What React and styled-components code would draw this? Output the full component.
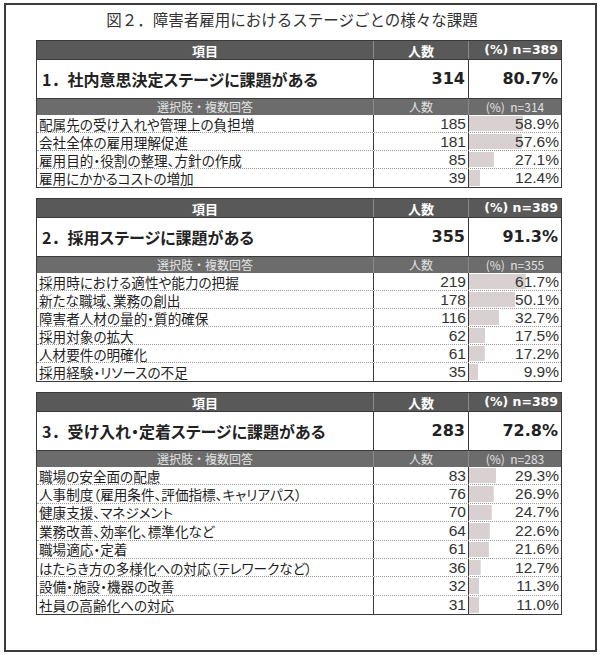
import React from 'react';
import styled, { createGlobalStyle } from 'styled-components';

const GlobalStyle = createGlobalStyle`
  html, body {
    margin: 0;
    padding: 0;
    background: #ffffff;
  }
  body {
    font-family: 'Noto Sans CJK JP', 'Noto Sans', sans-serif;
    color: #222;
  }
`;

const Frame = styled.div`
  box-sizing: border-box;
  margin: 3px 5px 0 4px;
  width: 593px;
  height: 649px;
  border: 2px solid #3c3c3c;
  padding: 0 33px 0 30px;
  display: flex;
  flex-direction: column;
`;

const Title = styled.h1`
  margin: 0;
  height: 35px;
  padding-right: 14px;
  font-size: 15.5px;
  font-weight: 400;
  line-height: 28px;
  text-align: center;
  color: #333;
`;

const Table = styled.div`
  border: 1px solid #3a3a3a;
  margin-bottom: 10px;
`;

const Row = styled.div`
  display: grid;
  grid-template-columns: 337px 95px 1fr;
  height: ${(p) => p.h}px;
  background: ${(p) => p.bg || '#fff'};
  color: ${(p) => p.fg || '#222'};
  border-bottom: ${(p) => p.line || 'none'};
  box-sizing: border-box;
  &:last-child {
    border-bottom: none;
  }
`;

const Cell = styled.div`
  display: flex;
  align-items: center;
  justify-content: ${(p) => p.align || 'flex-start'};
  padding: 0 ${(p) => p.pad ?? 3}px;
  border-right: ${(p) => (p.last ? 'none' : `1px solid ${p.sep || '#3a3a3a'}`)};
  font-size: ${(p) => p.size || 13}px;
  font-weight: ${(p) => (p.bold ? 700 : 400)};
  font-family: ${(p) => (p.num ? "'DejaVu Sans', 'Noto Sans', sans-serif" : 'inherit')};
  line-height: 1;
  white-space: nowrap;
  overflow: hidden;
  box-sizing: border-box;
`;

const BarCell = styled(Cell)`
  background: linear-gradient(#d8d0d1, #d8d0d1) no-repeat left center /
    ${(p) => p.pct}% calc(100% - 2px);
`;

const StageName = styled.span`
  font-feature-settings: 'palt' 1;
`;

const ItemText = styled.span`
  font-size: 13.6px;
  line-height: 14px;
  font-feature-settings: 'palt' 1;
  color: #1e1e1e;
`;

const NumText = styled.span`
  font-family: 'Liberation Sans', 'DejaVu Sans', sans-serif;
  font-size: 15.5px;
  line-height: 14px;
  color: #333;
`;

const tables = [
  {
    no: '1．',
    title: '社内意思決定ステージに課題がある',
    count: 314,
    pct: '80.7%',
    rowH: 18,
    items: [
      ['配属先の受け入れや管理上の負担増', 185, 58.9],
      ['会社全体の雇用理解促進', 181, 57.6],
      ['雇用目的・役割の整理、方針の作成', 85, 27.1],
      ['雇用にかかるコストの増加', 39, 12.4],
    ],
  },
  {
    no: '2．',
    title: '採用ステージに課題がある',
    count: 355,
    pct: '91.3%',
    rowH: 18,
    items: [
      ['採用時における適性や能力の把握', 219, 61.7],
      ['新たな職域、業務の創出', 178, 50.1],
      ['障害者人材の量的・質的確保', 116, 32.7],
      ['採用対象の拡大', 62, 17.5],
      ['人材要件の明確化', 61, 17.2],
      ['採用経験・リソースの不足', 35, 9.9],
    ],
  },
  {
    no: '3．',
    title: '受け入れ・定着ステージに課題がある',
    count: 283,
    pct: '72.8%',
    rowH: 18.4,
    items: [
      ['職場の安全面の配慮', 83, 29.3],
      ['人事制度（雇用条件、評価指標、キャリアパス）', 76, 26.9],
      ['健康支援、マネジメント', 70, 24.7],
      ['業務改善、効率化、標準化など', 64, 22.6],
      ['職場適応・定着', 61, 21.6],
      ['はたらき方の多様化への対応（テレワークなど）', 36, 12.7],
      ['設備・施設・機器の改善', 32, 11.3],
      ['社員の高齢化への対応', 31, 11.0],
    ],
  },
];

const StageTable = ({ no, title, count, pct, rowH, items }) => (
  <Table>
    <Row h={19} bg="#595959" fg="#fff" line="1px solid #3a3a3a">
      <Cell align="center" bold size={13} sep="#8a8a8a">項目</Cell>
      <Cell align="center" bold size={13} sep="#8a8a8a">人数</Cell>
      <Cell align="flex-end" bold size={12.5} num last>
        (%) n=389
      </Cell>
    </Row>
    <Row h={39} line="1px solid #3a3a3a">
      <Cell bold size={16} pad={5}>
        <span>{no}</span>
        <StageName>{title}</StageName>
      </Cell>
      <Cell align="flex-end" bold size={16} num>{count}</Cell>
      <Cell align="flex-end" bold size={16} num last>{pct}</Cell>
    </Row>
    <Row h={16} bg="#6c6c6c" fg="#e2e2e2">
      <Cell align="center" size={12} sep="#8a8a8a">選択肢・複数回答</Cell>
      <Cell align="center" size={12} sep="#8a8a8a">人数</Cell>
      <Cell align="center" size={12} last>
        (%)&nbsp;&nbsp;n={count}
      </Cell>
    </Row>
    {items.map(([label, n, p]) => (
      <Row key={label} h={rowH} line="1px dotted #9a9a9a">
        <Cell pad={2}>
          <ItemText>{label}</ItemText>
        </Cell>
        <Cell align="flex-end" pad={2}>
          <NumText>{n}</NumText>
        </Cell>
        <BarCell align="flex-end" pad={2} pct={p} last>
          <NumText>{p.toFixed(1)}%</NumText>
        </BarCell>
      </Row>
    ))}
  </Table>
);

export default function App() {
  return (
    <>
      <GlobalStyle />
      <Frame>
        <Title>図２．障害者雇用におけるステージごとの様々な課題</Title>
        {tables.map((t) => (
          <StageTable key={t.title} {...t} />
        ))}
      </Frame>
    </>
  );
}
